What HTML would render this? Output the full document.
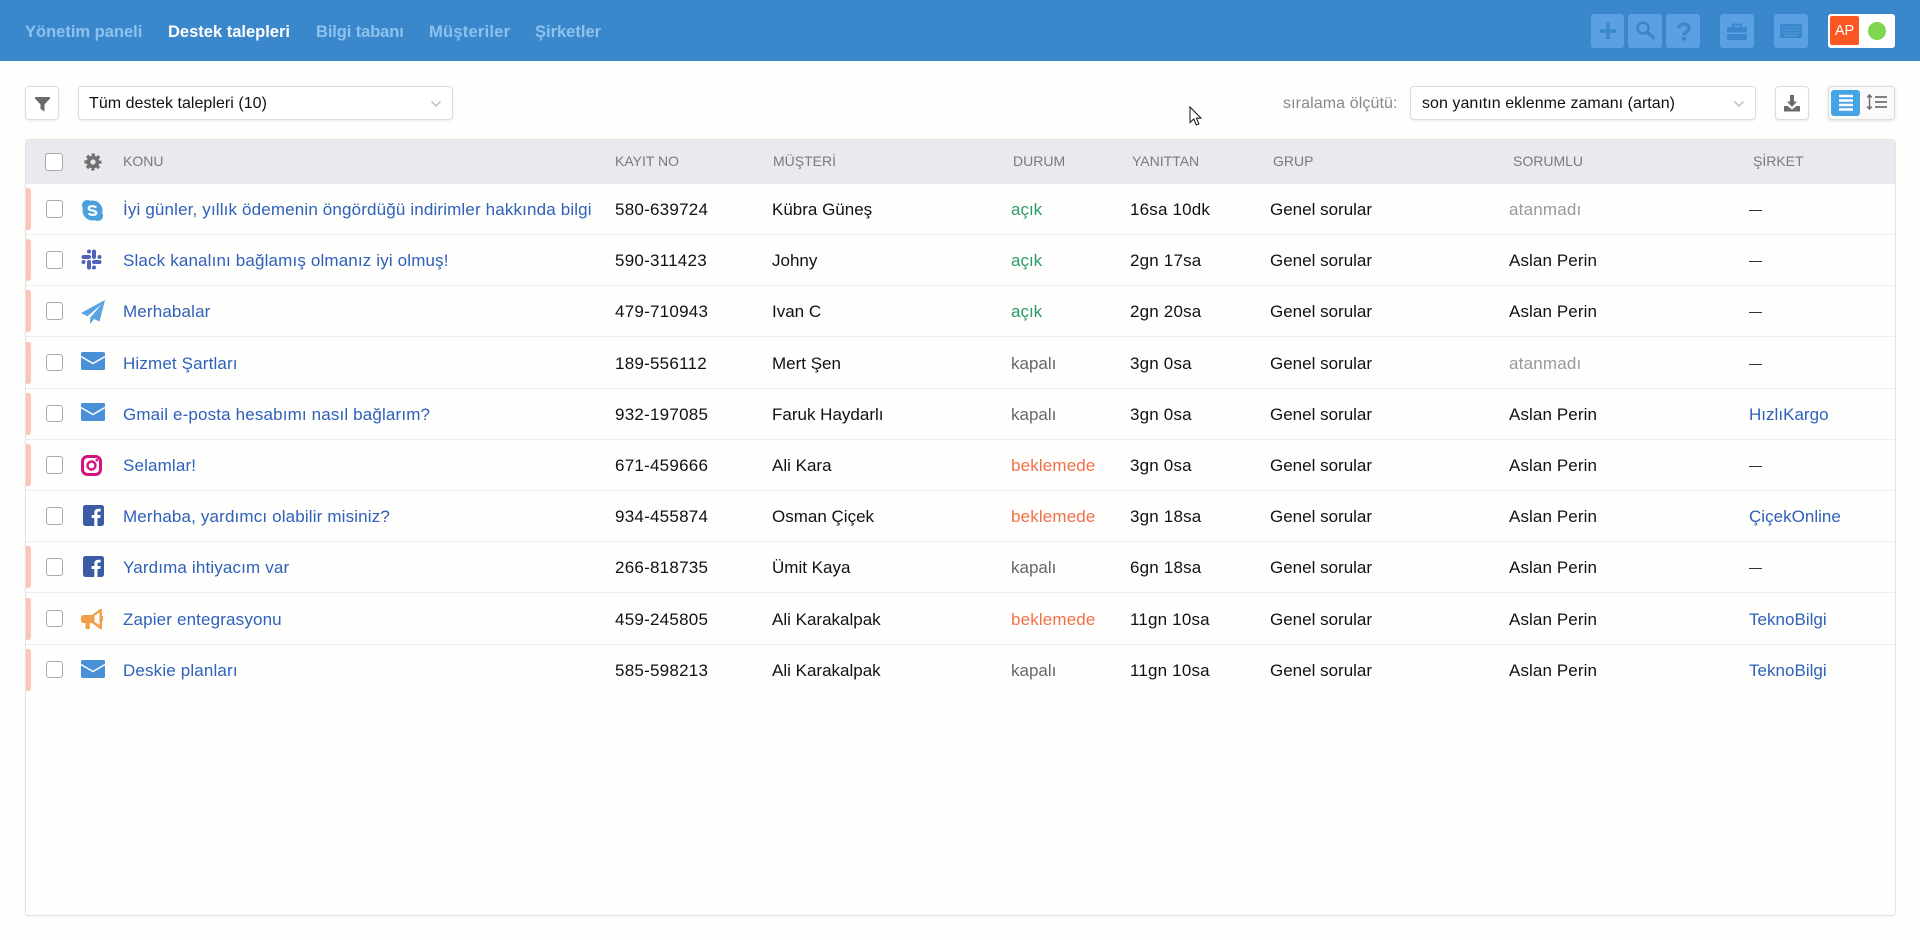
<!DOCTYPE html>
<html lang="tr"><head><meta charset="utf-8"><title>Destek talepleri</title>
<style>
*{box-sizing:border-box}
html,body{margin:0;padding:0;width:1920px;height:940px;overflow:hidden;background:#fefefc;font-family:"Liberation Sans",sans-serif;color:#111}
.abs,.hb,.n,.th,.cb,.ic,.bar,.c{position:absolute}
#hd{position:absolute;left:0;top:0;width:1920px;height:61px;background:#3b87cc}
.n{top:20px;line-height:24px;font-size:16.5px;font-weight:bold;color:#8ec2ec;white-space:nowrap}
.hb{top:14px;width:34px;height:34px;background:#5ba0e2;border-radius:3px}
.hb svg{position:absolute;left:0;top:0}
.box{position:absolute;background:#fff;border:1px solid #dcdde0;border-radius:4px;box-shadow:0 1px 2px rgba(0,0,0,.07)}
.sel{top:86px;height:34px;font-size:16px;line-height:34px;letter-spacing:.04px;color:#111;white-space:nowrap}
#tb{position:absolute;left:25px;top:139px;width:1871px;height:777px;border:1px solid #e2e3e6;border-radius:4px;box-shadow:0 2px 3px rgba(0,0,0,.03)}
#th{position:absolute;left:26px;top:140px;width:1869px;height:44px;background:#e9eaed;border-radius:3px 3px 0 0}
.th{top:152px;line-height:18px;font-size:14px;color:#7a7a7a;white-space:nowrap}
.r{position:absolute;left:26px;width:1869px;height:51.2px}
.r i{position:absolute;left:0;right:0;top:50px;height:1px;background:#eeeeee}
.bar{left:0;top:4px;width:5px;height:42px;background:#fcc6b7;border-radius:0 3px 3px 0}
.cb{left:19.5px;top:16px;width:17.5px;height:17.5px;border:1.5px solid #a9a9a9;border-radius:3px;background:#fff}
.ic{left:55px;top:14px}
.c{top:0;line-height:51.5px;font-size:17px;color:#111;white-space:nowrap}
.s{left:97px;color:#2f60ba;letter-spacing:.15px}
.k{left:589px;letter-spacing:.24px}.m{left:746px}.d{left:985px}.y{left:1104px;letter-spacing:.18px}.g{left:1244px}.o{left:1483px;letter-spacing:.1px}.f{left:1723px}
.l{color:#2f60ba;letter-spacing:.02px}.u{color:#999;letter-spacing:.2px}.ok{color:#2c9a6c}.cl{color:#666}.w{color:#f0704a;letter-spacing:.15px}
.f.dash{font-size:13px}
</style></head><body>
<div id="hd"></div>
<div class="n" style="left:25px">Yönetim paneli</div>
<div class="n" style="left:168px;color:#fff">Destek talepleri</div>
<div class="n" style="left:316px;letter-spacing:-.1px">Bilgi tabanı</div>
<div class="n" style="left:429px;letter-spacing:.25px">Müşteriler</div>
<div class="n" style="left:535px">Şirketler</div>

<div class="hb" style="left:1591px;width:33px"><svg width="33" height="34"><path d="M17 9v16M9 17h16" stroke="#3b87cc" stroke-width="3.600"/></svg></div>
<div class="hb" style="left:1628px"><svg width="34" height="34"><circle cx="15" cy="14" r="5.500" fill="none" stroke="#3b87cc" stroke-width="2.600"/><path d="M19 18l7.500 6.500" stroke="#3b87cc" stroke-width="3.200"/></svg></div>
<div class="hb" style="left:1666px"><svg width="34" height="34"><path d="M12.800 14.500c0-6 10.200-6 10.200 0 0 3.800-5 3.300-5 7" fill="none" stroke="#3b87cc" stroke-width="3.400"/><rect x="16" y="23" width="4" height="3.500" fill="#3b87cc"/></svg></div>
<div class="hb" style="left:1720px"><svg width="34" height="34"><path d="M13 13v-2.500h8V13" fill="none" stroke="#3b87cc" stroke-width="2"/><rect x="7" y="13" width="20" height="5.500" rx="1" fill="#3b87cc"/><rect x="7" y="20" width="20" height="6" rx="1" fill="#3b87cc"/></svg></div>
<div class="hb" style="left:1774px"><svg width="34" height="34"><rect x="6" y="10" width="22" height="14" rx="1.500" fill="#3b87cc"/><path d="M8 13h18M8 16h18M8 19h18" stroke="#5ba0e2" stroke-width="1" stroke-dasharray="1.200 1"/><path d="M11 21.500h12" stroke="#5ba0e2"/></svg></div>
<div class="abs" style="left:1828px;top:14px;width:67px;height:34px;background:#fff;border-radius:3px"></div>
<div class="abs" style="left:1830px;top:16px;width:29px;height:29px;background:#fb5722;border-radius:2px;color:#fff;font-size:14.500px;line-height:31px;text-align:center">AP</div>
<div class="abs" style="left:1868px;top:22px;width:18px;height:18px;background:#7fd651;border-radius:50%"></div>

<div class="box" style="left:25px;top:86px;width:34px;height:34px"><svg width="32" height="32" style="position:absolute;left:0;top:0"><path d="M9 10h15v1.500l-5.500 6v7l-4-2.500v-4.500L9 11.500z" fill="#6a6a6a"/></svg></div>
<div class="box sel" style="left:78px;width:375px;padding-left:10px">Tüm destek talepleri (10)
<svg width="12" height="8" style="position:absolute;left:351px;top:13px"><path d="M1.500 1.500l4.500 4.500 4.500-4.500" fill="none" stroke="#b8b8b8" stroke-width="1.300"/></svg></div>
<div class="abs" style="left:1283px;top:92.500px;font-size:16px;line-height:22px;letter-spacing:.1px;color:#888;white-space:nowrap">sıralama ölçütü:</div>
<div class="box sel" style="left:1410px;width:346px;padding-left:11px">son yanıtın eklenme zamanı (artan)
<svg width="12" height="8" style="position:absolute;left:322px;top:13px"><path d="M1.500 1.500l4.500 4.500 4.500-4.500" fill="none" stroke="#b8b8b8" stroke-width="1.300"/></svg></div>
<div class="box" style="left:1775px;top:86px;width:34px;height:34px"><svg width="32" height="32" style="position:absolute;left:0;top:0"><path d="M14 8h4v6.500h3l-5 5.500-5-5.500h3z" fill="#6a6a6a"/><path d="M8 19h3.500l4.500 3.500 4.500-3.500H24v5.500H8z" fill="#6a6a6a"/></svg></div>
<div class="box" style="left:1828px;top:86px;width:67px;height:34px;background:#fafafa;box-shadow:0 1px 3px rgba(0,0,0,.12)"></div>
<div class="abs" style="left:1831px;top:90px;width:29px;height:26px;background:#46a3e6;border-radius:3px"><svg width="29" height="26"><path d="M8 6h14M8 10.500h14M8 15h14M8 19.500h14" stroke="#fff" stroke-width="2.600"/></svg></div>
<svg class="abs" style="left:1866px;top:94px" width="22" height="16"><path d="M3.500 1.500v13M1.200 3.500L3.500 1l2.300 2.500M1.200 12.500L3.500 15l2.300-2.500" fill="none" stroke="#707070" stroke-width="1.500"/><path d="M9 3h12M9 8h12M9 13h12" stroke="#707070" stroke-width="1.700"/></svg>

<div id="tb"></div><div id="th"></div>
<div class="cb" style="left:45px;top:153px;width:17.500px;height:17.500px;position:absolute"></div>
<svg class="abs" style="left:84px;top:152.500px" width="18" height="18" viewBox="0 0 20 20"><circle cx="10" cy="10" r="5" fill="none" stroke="#707070" stroke-width="4.200"/><circle cx="10" cy="10" r="8" fill="none" stroke="#707070" stroke-width="3" stroke-dasharray="3.600 2.683" stroke-dashoffset="1.800"/></svg>
<div class="th" style="left:123px">KONU</div>
<div class="th" style="left:615px">KAYIT NO</div>
<div class="th" style="left:773px">MÜŞTERİ</div>
<div class="th" style="left:1013px">DURUM</div>
<div class="th" style="left:1132px">YANITTAN</div>
<div class="th" style="left:1273px">GRUP</div>
<div class="th" style="left:1513px">SORUMLU</div>
<div class="th" style="left:1753px">ŞİRKET</div>

<div class="r" style="top:184px"><i></i><b class="bar"></b><div class="cb"></div>
<svg class="ic" style="top:15px" width="23" height="23" viewBox="0 0 24 24"><circle cx="12" cy="12" r="10.400" fill="#4a9fdd"/><circle cx="6.500" cy="6.500" r="5.500" fill="#4a9fdd"/><circle cx="17.500" cy="17.500" r="5.500" fill="#4a9fdd"/><path d="M15.800 9c-1.300-2-7.800-2.300-7.800.8 0 3 8 1.700 8 4.600 0 2.900-6.300 2.700-8.100.5" fill="none" stroke="#fff" stroke-width="2.300"/></svg>
<div class="c s">İyi günler, yıllık ödemenin öngördüğü indirimler hakkında bilgi</div><div class="c k">580-639724</div><div class="c m">Kübra Güneş</div><div class="c d ok">açık</div><div class="c y">16sa 10dk</div><div class="c g">Genel sorular</div><div class="c o u">atanmadı</div><div class="c f dash">—</div></div>

<div class="r" style="top:235.200px"><i></i><b class="bar"></b><div class="cb"></div>
<svg class="ic" style="top:14px" width="21" height="21" viewBox="0 0 21 21" stroke="#5163b8" stroke-width="4" stroke-linecap="round"><path d="M8 2.500v0M2.500 8H8M13 2.500V8M18.500 8v0M18.500 13H13M13 18.500v0M8 13v5.500M2.500 13v0"/></svg>
<div class="c s">Slack kanalını bağlamış olmanız iyi olmuş!</div><div class="c k">590-311423</div><div class="c m">Johny</div><div class="c d ok">açık</div><div class="c y">2gn 17sa</div><div class="c g">Genel sorular</div><div class="c o">Aslan Perin</div><div class="c f dash">—</div></div>

<div class="r" style="top:286.400px"><i></i><b class="bar"></b><div class="cb"></div>
<svg class="ic" style="top:13.500px" width="24" height="24" viewBox="0 0 24 24"><path d="M24 0L0 13l6.500 3.300L21 4 9.300 17.500 9 24l4-5 5.500 2.500z" fill="#5aa3e0"/></svg>
<div class="c s">Merhabalar</div><div class="c k">479-710943</div><div class="c m">Ivan C</div><div class="c d ok">açık</div><div class="c y">2gn 20sa</div><div class="c g">Genel sorular</div><div class="c o">Aslan Perin</div><div class="c f dash">—</div></div>

<div class="r" style="top:337.600px"><i></i><b class="bar"></b><div class="cb"></div>
<svg class="ic" style="top:14.500px" width="24" height="18" viewBox="0 0 24 18"><rect width="24" height="18" rx="1.500" fill="#4a90d9"/><path d="M0 4.500l12 7 12-7" fill="none" stroke="#fff" stroke-width="1.500"/></svg>
<div class="c s">Hizmet Şartları</div><div class="c k">189-556112</div><div class="c m">Mert Şen</div><div class="c d cl">kapalı</div><div class="c y">3gn 0sa</div><div class="c g">Genel sorular</div><div class="c o u">atanmadı</div><div class="c f dash">—</div></div>

<div class="r" style="top:388.800px"><i></i><b class="bar"></b><div class="cb"></div>
<svg class="ic" style="top:14.500px" width="24" height="18" viewBox="0 0 24 18"><rect width="24" height="18" rx="1.500" fill="#4a90d9"/><path d="M0 4.500l12 7 12-7" fill="none" stroke="#fff" stroke-width="1.500"/></svg>
<div class="c s">Gmail e-posta hesabımı nasıl bağlarım?</div><div class="c k">932-197085</div><div class="c m">Faruk Haydarlı</div><div class="c d cl">kapalı</div><div class="c y">3gn 0sa</div><div class="c g">Genel sorular</div><div class="c o">Aslan Perin</div><div class="c f l">HızlıKargo</div></div>

<div class="r" style="top:440px"><i></i><b class="bar"></b><div class="cb"></div>
<svg class="ic" style="top:14.500px" width="21" height="21" viewBox="0 0 21 21"><rect x="1.500" y="1.500" width="18" height="18" rx="5" fill="none" stroke="#d4127e" stroke-width="3"/><circle cx="10.500" cy="10.500" r="4" fill="none" stroke="#d4127e" stroke-width="2.400"/><circle cx="15.800" cy="5.200" r="1.300" fill="#d4127e"/></svg>
<div class="c s">Selamlar!</div><div class="c k">671-459666</div><div class="c m">Ali Kara</div><div class="c d w">beklemede</div><div class="c y">3gn 0sa</div><div class="c g">Genel sorular</div><div class="c o">Aslan Perin</div><div class="c f dash">—</div></div>

<div class="r" style="top:491.200px"><i></i><div class="cb"></div>
<svg class="ic" style="left:56.500px;top:14px" width="21" height="21" viewBox="0 0 21 21"><rect width="21" height="21" rx="2.500" fill="#3b5ba5"/><path d="M14.500 21v-8h2.700l.4-3h-3.100V8c0-.9.300-1.500 1.600-1.500h1.600V3.800c-.3 0-1.300-.1-2.400-.1-2.400 0-4 1.400-4 4.100V10H8.600v3h2.700v8z" fill="#fff"/></svg>
<div class="c s">Merhaba, yardımcı olabilir misiniz?</div><div class="c k">934-455874</div><div class="c m">Osman Çiçek</div><div class="c d w">beklemede</div><div class="c y">3gn 18sa</div><div class="c g">Genel sorular</div><div class="c o">Aslan Perin</div><div class="c f l">ÇiçekOnline</div></div>

<div class="r" style="top:542.400px"><i></i><b class="bar"></b><div class="cb"></div>
<svg class="ic" style="left:56.500px;top:14px" width="21" height="21" viewBox="0 0 21 21"><rect width="21" height="21" rx="2.500" fill="#3b5ba5"/><path d="M14.500 21v-8h2.700l.4-3h-3.100V8c0-.9.300-1.500 1.600-1.500h1.600V3.800c-.3 0-1.300-.1-2.400-.1-2.400 0-4 1.400-4 4.100V10H8.600v3h2.700v8z" fill="#fff"/></svg>
<div class="c s">Yardıma ihtiyacım var</div><div class="c k">266-818735</div><div class="c m">Ümit Kaya</div><div class="c d cl">kapalı</div><div class="c y">6gn 18sa</div><div class="c g">Genel sorular</div><div class="c o">Aslan Perin</div><div class="c f dash">—</div></div>

<div class="r" style="top:593.600px"><i></i><b class="bar"></b><div class="cb"></div>
<svg class="ic" style="top:15px" width="22" height="20" viewBox="0 0 22 20"><path d="M2.500 6H11l8-6h2v20h-2l-8-6H8.800v6H4.500v-6h-2A2.500 2.500 0 0 1 0 11.500v-3A2.500 2.500 0 0 1 2.500 6z" fill="#f0a04b"/><rect x="20" y="7" width="2" height="5" fill="#f0a04b"/><path d="M13.500 6.800l5-3.300v12.500l-5-3.300z" fill="#fefefc"/></svg>
<div class="c s">Zapier entegrasyonu</div><div class="c k">459-245805</div><div class="c m">Ali Karakalpak</div><div class="c d w">beklemede</div><div class="c y">11gn 10sa</div><div class="c g">Genel sorular</div><div class="c o">Aslan Perin</div><div class="c f l">TeknoBilgi</div></div>

<div class="r" style="top:644.800px"><b class="bar"></b><div class="cb"></div>
<svg class="ic" style="top:15px" width="24" height="18" viewBox="0 0 24 18"><rect width="24" height="18" rx="1.500" fill="#4a90d9"/><path d="M0 4.500l12 7 12-7" fill="none" stroke="#fff" stroke-width="1.500"/></svg>
<div class="c s">Deskie planları</div><div class="c k">585-598213</div><div class="c m">Ali Karakalpak</div><div class="c d cl">kapalı</div><div class="c y">11gn 10sa</div><div class="c g">Genel sorular</div><div class="c o">Aslan Perin</div><div class="c f l">TeknoBilgi</div></div>

<svg class="abs" style="left:1189px;top:106px" width="14" height="21" viewBox="0 0 14 21"><path d="M1 1v15.500l3.800-3.500 2.500 6 2.600-1.100-2.500-5.800H12z" fill="#fff" stroke="#111" stroke-width="1"/></svg>
</body></html>
